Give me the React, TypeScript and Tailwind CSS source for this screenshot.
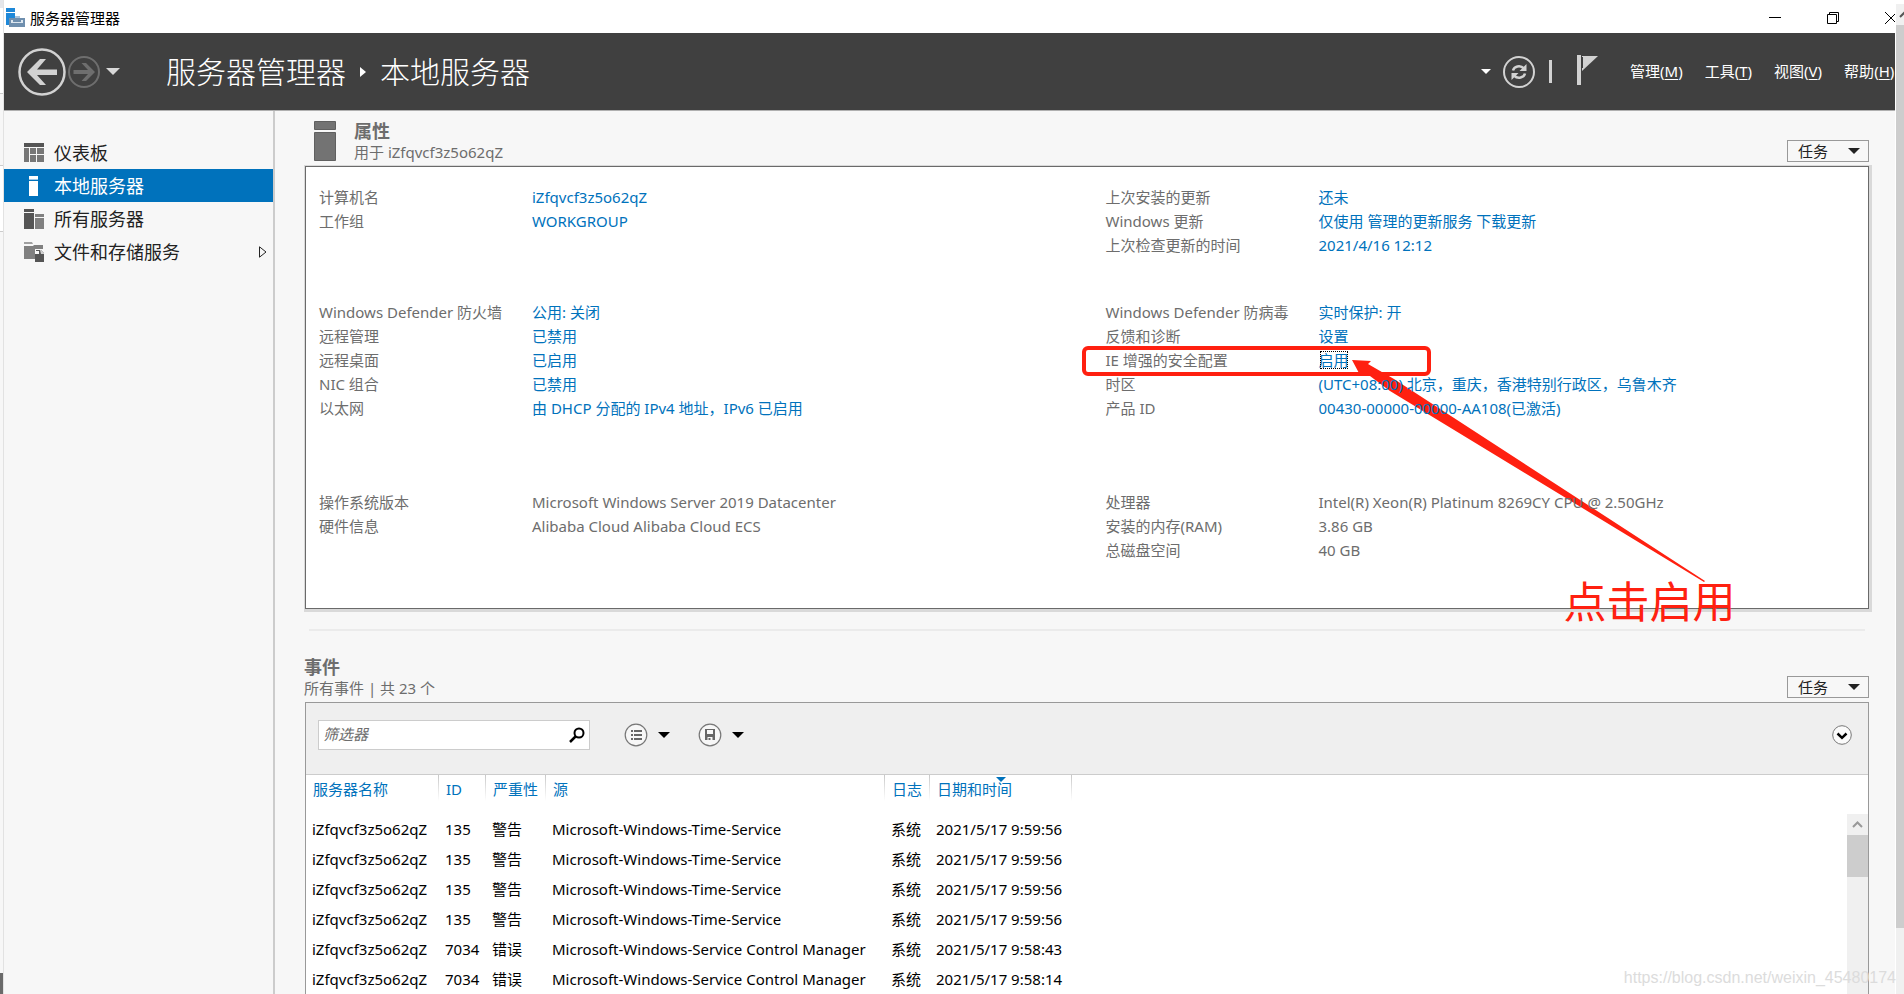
import React, { useState } from 'react';

type Property = {
  label: string;
  value: string;
  link?: boolean;
  focused?: boolean;
};

const leftGroups: Property[][] = [
  [
    { label: '计算机名', value: 'iZfqvcf3z5o62qZ', link: true },
    { label: '工作组', value: 'WORKGROUP', link: true },
  ],
  [
    { label: 'Windows Defender 防火墙', value: '公用: 关闭', link: true },
    { label: '远程管理', value: '已禁用', link: true },
    { label: '远程桌面', value: '已启用', link: true },
    { label: 'NIC 组合', value: '已禁用', link: true },
    { label: '以太网', value: '由 DHCP 分配的 IPv4 地址，IPv6 已启用', link: true },
  ],
  [
    { label: '操作系统版本', value: 'Microsoft Windows Server 2019 Datacenter' },
    { label: '硬件信息', value: 'Alibaba Cloud Alibaba Cloud ECS' },
  ],
];

const rightGroups: Property[][] = [
  [
    { label: '上次安装的更新', value: '还未', link: true },
    { label: 'Windows 更新', value: '仅使用 管理的更新服务 下载更新', link: true },
    { label: '上次检查更新的时间', value: '2021/4/16 12:12', link: true },
  ],
  [
    { label: 'Windows Defender 防病毒', value: '实时保护: 开', link: true },
    { label: '反馈和诊断', value: '设置', link: true },
    { label: 'IE 增强的安全配置', value: '启用', link: true, focused: true },
    { label: '时区', value: '(UTC+08:00) 北京，重庆，香港特别行政区，乌鲁木齐', link: true },
    { label: '产品 ID', value: '00430-00000-00000-AA108(已激活)', link: true },
  ],
  [
    { label: '处理器', value: 'Intel(R) Xeon(R) Platinum 8269CY CPU @ 2.50GHz' },
    { label: '安装的内存(RAM)', value: '3.86 GB' },
    { label: '总磁盘空间', value: '40 GB' },
  ],
];

const host = 'iZfqvcf3z5o62qZ';

const events = [
  [host, '135', '警告', 'Microsoft-Windows-Time-Service', '系统', '2021/5/17 9:59:56'],
  [host, '135', '警告', 'Microsoft-Windows-Time-Service', '系统', '2021/5/17 9:59:56'],
  [host, '135', '警告', 'Microsoft-Windows-Time-Service', '系统', '2021/5/17 9:59:56'],
  [host, '135', '警告', 'Microsoft-Windows-Time-Service', '系统', '2021/5/17 9:59:56'],
  [host, '7034', '错误', 'Microsoft-Windows-Service Control Manager', '系统', '2021/5/17 9:58:43'],
  [host, '7034', '错误', 'Microsoft-Windows-Service Control Manager', '系统', '2021/5/17 9:58:14'],
];

const columns = [
  { title: '服务器名称', width: 'w-[133px]' },
  { title: 'ID', width: 'w-[47px]' },
  { title: '严重性', width: 'w-[60px]' },
  { title: '源', width: 'w-[339px]' },
  { title: '日志', width: 'w-[45px]' },
  { title: '日期和时间', width: 'w-[142px]', sorted: true },
];

const Triangle = ({ className }: { className: string }) => (
  <svg viewBox="0 0 12 6" className={className} fill="currentColor" aria-hidden="true">
    <path d="M0 0h12L6 6z" />
  </svg>
);

const DashboardIcon = () => (
  <svg viewBox="0 0 20 20" className="h-5 w-5">
    <path fill="#555" d="M0 0h20v4H0z" />
    <path fill="#777" d="M0 5h5v14H0zM6 5h6v6H6zM13 5h7v6h-7zM6 12h6v7H6zM13 12h7v7h-7z" />
  </svg>
);

const LocalServerIcon = () => (
  <svg viewBox="0 0 20 20" className="h-5 w-5" fill="#fff">
    <path d="M5 0h9v3H5zM5 5h9v15H5z" />
    <path fill="#9cc9ea" d="M5 3h9v1H5z" />
  </svg>
);

const AllServersIcon = () => (
  <svg viewBox="0 0 20 20" className="h-5 w-5">
    <path fill="#555" d="M0 0h10v3H0zM0 4h10v16H0z" />
    <path fill="#808080" d="M11 5h9v3h-9zM11 9h9v11h-9z" />
  </svg>
);

const FilesIcon = () => (
  <svg viewBox="0 0 20 20" className="h-5 w-5">
    <path fill="#808080" d="M0 1h8v1H0zM0 4h9l1-1h9v4h-8v10H0z" />
    <path fill="#a0a0a0" d="M0 0h8l1 2H0z" />
    <path fill="#555" d="M12 8h5l3 3v9h-9v-8h4V9h-3z" />
    <path fill="#d0d0d0" d="M16 8h1l3 3v1h-3z" />
  </svg>
);

const navItems = [
  { name: '仪表板', icon: <DashboardIcon /> },
  { name: '本地服务器', icon: <LocalServerIcon /> },
  { name: '所有服务器', icon: <AllServersIcon /> },
  { name: '文件和存储服务', icon: <FilesIcon />, expandable: true },
];

const menus = [
  { name: '管理', letter: 'M' },
  { name: '工具', letter: 'T' },
  { name: '视图', letter: 'V' },
  { name: '帮助', letter: 'H' },
];

const TasksButton = () => (
  <button type="button" className="flex h-[22px] w-[82px] shrink-0 items-center justify-between border border-[#999] bg-[#f7f7f7] pr-2 pl-2.5 text-[15px] leading-5 text-[#222]">
    任务
    <Triangle className="h-1.5 w-3" />
  </button>
);

// Red frame and arrow that point at the IE setting
const Callout = () => (
  <>
    <span className="pointer-events-none absolute -top-0.5 -left-6 h-[30px] w-[349px] rounded-md border-4 border-[#ff2010]" />
    <svg viewBox="0 0 360 232" className="pointer-events-none absolute top-3 left-[246px] h-[232px] w-[360px]" fill="#ff2010">
      <path d="M0 0L19 1L16 4L42 19L353 221L352 222L38 31L14 13L8 15Z" />
    </svg>
    <span className="pointer-events-none absolute top-[226px] left-[458px] text-[43px] leading-[56px] whitespace-nowrap text-[#ff2010]">点击启用</span>
  </>
);

const PropertyRow = ({ item }: { item: Property }) => (
  <div className="relative flex leading-6 whitespace-nowrap">
    <dt className="w-[213px] shrink-0 text-[#6d6d6d]">{item.label}</dt>
    <dd>
      {item.link ? (
        <a href="#" className={item.focused ? 'text-[#0072bc] outline-1 -outline-offset-2 outline-black outline-dotted' : 'text-[#0072bc]'}>
          {item.value}
        </a>
      ) : (
        <span className="text-[#6d6d6d]">{item.value}</span>
      )}
    </dd>
    {item.focused && <Callout />}
  </div>
);

const PropertyColumn = ({ groups }: { groups: Property[][] }) => (
  <dl>
    <div className="h-[115px]">{groups[0].map((item) => <PropertyRow key={item.label} item={item} />)}</div>
    <div className="h-[190px]">{groups[1].map((item) => <PropertyRow key={item.label} item={item} />)}</div>
    <div className="h-[118px]">{groups[2].map((item) => <PropertyRow key={item.label} item={item} />)}</div>
  </dl>
);

const TitleBar = () => (
  <div className="flex h-[33px] shrink-0 items-center bg-white">
    <svg viewBox="0 0 20 20" className="ml-0.5 h-5 w-5">
      <path fill="#1e88d8" d="M0 1h9v4H0zM0 6h9v12H0z" />
      <path fill="#a9c3da" d="M9 9h5v3H9z" />
      <path fill="#6f8fae" d="M3 11h16v9H3z" />
      <path fill="#dce6ef" d="M5 13h12v3H5z" />
      <path fill="#6f8fae" d="M7 13h8v2H7z" />
    </svg>
    <span className="ml-1 grow pt-0.5 text-[15px] leading-6 text-black">服务器管理器</span>
    <div className="flex pt-[3px] text-black">
      <button type="button" aria-label="Minimize" className="w-[58px]">
        <svg viewBox="0 0 12 12" className="h-3 w-3" stroke="currentColor"><path d="M0 5.5h12" /></svg>
      </button>
      <button type="button" aria-label="Restore" className="w-[58px]">
        <svg viewBox="0 0 12 12" className="h-3 w-3" fill="none" stroke="currentColor"><path d="M.5 2.500h9v9h-9zM2.500 2.500v-2h9v9h-2" /></svg>
      </button>
      <button type="button" aria-label="Close" className="w-2.5 overflow-hidden">
        <svg viewBox="0 0 12 12" className="h-3 w-3 max-w-none" stroke="currentColor"><path d="M0 0l12 12M12 0L0 12" /></svg>
      </button>
    </div>
  </div>
);

const NavHeader = () => (
  <header className="flex h-[78px] shrink-0 items-center border-b border-[#b0b0b0] bg-[#404040] text-white">
    <button type="button" aria-label="Back" className="ml-3.5">
      <svg viewBox="0 0 48 48" className="h-12 w-12" fill="none" stroke="#d2d2d2">
        <circle cx="24" cy="24" r="22.500" strokeWidth="2.500" />
        <path fill="#d2d2d2" stroke="none" d="M9 24L22 11h6L19 21.500h20v5.500H19L28 37h-6z" />
      </svg>
    </button>
    <button type="button" aria-label="Forward" className="ml-0.5">
      <svg viewBox="0 0 32 32" className="h-8 w-8" fill="none" stroke="#6e6e6e">
        <circle cx="16" cy="16" r="15" strokeWidth="2" />
        <path fill="#6e6e6e" stroke="none" d="M27 16L18 7h-4.500L20 14H5.500v4H20L13.500 25H18z" />
      </svg>
    </button>
    <button type="button" aria-label="History" className="ml-1.5">
      <Triangle className="h-[7px] w-3.5 text-[#d8d8d8]" />
    </button>
    <h1 className="ml-[46px] flex grow items-center text-3xl font-light whitespace-nowrap">
      服务器管理器
      <svg viewBox="0 0 6 10" className="mx-3.5 h-2.5 w-1.5" fill="#fff"><path d="M0 0l6 5-6 5z" /></svg>
      本地服务器
    </h1>
    <button type="button" aria-label="Notifications list">
      <Triangle className="h-[5px] w-2.5" />
    </button>
    <button type="button" aria-label="Refresh" className="ml-3">
      <svg viewBox="0 0 32 32" className="h-8 w-8" fill="none" stroke="#d2d2d2">
        <circle cx="16" cy="16" r="15" strokeWidth="2" />
        <path strokeWidth="2.500" d="M10 14.500c1-4 7-6 11-2M22 17.500c-1 4-7 6-11 2" />
        <path fill="#d2d2d2" stroke="none" d="M23.500 8v7h-7zM8.500 24v-7h7z" />
      </svg>
    </button>
    <span className="ml-3.5 h-[23px] w-[3px] bg-[#d2d2d2]" />
    <button type="button" aria-label="Notifications" className="ml-6 pb-1">
      <svg viewBox="0 0 24 30" className="h-[30px] w-6" fill="#d2d2d2">
        <path d="M1 0h4v30H1z" />
        <path d="M6 1h16L6 16z" />
        <path stroke="#404040" d="M6.500 2v11" />
      </svg>
    </button>
    <nav className="ml-[30px] flex w-[265px] shrink-0 gap-[22px] text-[15px]">
      {menus.map((menu) => (
        <button key={menu.letter} type="button" className="shrink-0 pb-0.5 leading-6">
          {menu.name}(<u className="underline-offset-2">{menu.letter}</u>)
        </button>
      ))}
    </nav>
  </header>
);

const Sidebar = () => {
  const [active, setActive] = useState('本地服务器');

  return (
    <aside className="w-[271px] shrink-0 border-r-2 border-[#ccc] pt-[25px]">
      {navItems.map((item) => (
        <button
          key={item.name}
          type="button"
          onClick={() => setActive(item.name)}
          className={`flex h-[33px] w-full items-center gap-2.5 pr-1.5 pl-5 text-lg ${active === item.name ? 'bg-[#0072bc] text-white' : 'text-[#222]'}`}
        >
          {item.icon}
          <span className="grow text-left">{item.name}</span>
          {item.expandable && (
            <svg viewBox="0 0 8 12" className="h-3 w-2" fill="none" stroke="#222"><path d="M.5.8L7 6 .5 11.200z" /></svg>
          )}
        </button>
      ))}
    </aside>
  );
};

const PropertiesPanel = () => (
  <section>
    <div className="flex items-end justify-between pb-1">
      <div className="flex items-center text-[#6d6d6d]">
        <svg viewBox="0 0 22 40" className="ml-[9px] h-10 w-[22px]" fill="#737373">
          <path stroke="#606060" d="M.5.5h21v8H.5zM.5 11.500h21v28H.5z" />
        </svg>
        <div className="ml-[18px]">
          <h2 className="text-lg leading-[22px] font-bold">属性</h2>
          <p className="leading-5">用于 {host}</p>
        </div>
      </div>
      <TasksButton />
    </div>
    <div className="grid grid-cols-2 gap-6 border border-[#6a6a6a] bg-white pt-[18px] pl-[13px] shadow-[1px_1px_0_2px_#d9d9d9]">
      <PropertyColumn groups={leftGroups} />
      <PropertyColumn groups={rightGroups} />
    </div>
  </section>
);

const EventsPanel = () => (
  <section className="flex min-h-0 grow flex-col">
    <div className="flex items-end justify-between pb-1">
      <div className="-ml-px text-[#6d6d6d]">
        <h2 className="text-lg leading-[22px] font-bold">事件</h2>
        <p className="leading-5">所有事件 | 共 23 个</p>
      </div>
      <TasksButton />
    </div>
    <div className="flex min-h-0 grow flex-col border border-b-0 border-[#999] bg-white">
      <div className="flex h-[72px] shrink-0 items-center border-b border-[#ccc] bg-[#efefef] pr-4 pb-2 pl-3">
        <label className="flex h-[30px] w-[272px] items-center border border-[#ccc] bg-white px-1">
          <input aria-label="筛选器" placeholder="筛选器" className="w-0 grow italic outline-none placeholder:text-[#6d6d6d]" />
          <svg viewBox="0 0 16 16" className="h-4 w-4" fill="none" stroke="#000">
            <circle cx="10" cy="6" r="4.500" strokeWidth="2" />
            <path strokeWidth="2.500" d="M7 9l-6 6" />
          </svg>
        </label>
        <button type="button" className="ml-[34px] flex items-center gap-2.5" aria-label="View">
          <svg viewBox="0 0 24 24" className="h-6 w-6">
            <circle cx="12" cy="12" r="10.800" fill="#f7f7f7" stroke="#777" strokeWidth="1.200" />
            <path fill="#666" d="M7 7h2v2H7zM10 7h8v2h-8zM7 11h2v2H7zM10 11h8v2h-8zM7 15h2v2H7zM10 15h8v2h-8z" />
          </svg>
          <Triangle className="h-1.5 w-3" />
        </button>
        <button type="button" className="ml-7 flex items-center gap-2.5" aria-label="Save">
          <svg viewBox="0 0 24 24" className="h-6 w-6">
            <circle cx="12" cy="12" r="10.800" fill="#f7f7f7" stroke="#777" strokeWidth="1.200" />
            <path fill="#666" fillRule="evenodd" d="M7 6h10v11H7zM9 7v4h6V7zM9.500 14v3h1v-2h2v2h2v-3z" />
          </svg>
          <Triangle className="h-1.5 w-3" />
        </button>
        <button type="button" className="ml-auto" aria-label="Expand">
          <svg viewBox="0 0 20 20" className="h-5 w-5" fill="none">
            <circle cx="10" cy="10" r="9.300" fill="#fbfbfb" stroke="#777" />
            <path stroke="#000" strokeWidth="2.500" d="M5.500 8.500L10 12.800l4.500-4.300" />
          </svg>
        </button>
      </div>
      <div className="flex min-h-0 grow justify-between overflow-hidden">
        <table className="w-max table-fixed self-start text-left whitespace-nowrap">
          <thead>
            <tr className="h-[39px] align-top leading-7 text-[#0072bc]">
              {columns.map((column) => (
                <th
                  key={column.title}
                  className={`relative bg-[linear-gradient(#c8c8c8,#fff)] bg-[length:1px_26px] bg-right-top bg-no-repeat p-0 pl-[7px] font-normal ${column.width}`}
                >
                  {column.title}
                  {column.sorted && <Triangle className="absolute top-0.5 left-[66px] h-[5px] w-2.5" />}
                </th>
              ))}
            </tr>
          </thead>
          <tbody className="leading-[30px] text-black">
            {events.map((event, index) => (
              <tr key={index}>
                {event.map((cell, i) => (
                  <td key={i} className="p-0 pl-1.5">{cell}</td>
                ))}
              </tr>
            ))}
          </tbody>
        </table>
        <div className="mt-[39px] w-[21px] bg-[#f0f0f0]">
          <svg viewBox="0 0 21 21" className="h-[21px] w-[21px]" fill="none" stroke="#999" strokeWidth="2"><path d="M6 13l4.500-4.500L15 13" /></svg>
          <div className="h-[42px] bg-[#cdcdcd]" />
        </div>
      </div>
    </div>
  </section>
);

const App = () => {
  return (
    <div className="relative flex h-screen overflow-hidden bg-white font-['Noto_Sans','Noto_Sans_CJK_SC',sans-serif] text-[15px]">
      {/* edge of the page behind the window */}
      <div className="flex w-1 shrink-0 flex-col border-r border-[#e2e2e2]">
        <div className="h-2 bg-[#e4e6ea]" />
        <div className="h-[86px] border-b border-[#ccc]" />
        <div className="h-[72px] border-b border-[#ccc] bg-[#f7f7f7]" />
        <div className="h-[66px] border-b border-[#ccc]" />
        <div className="grow bg-[#f7f7f7]" />
        <div className="h-[21px] bg-[#6a6a6a]" />
      </div>
      <div className="flex min-w-0 grow flex-col bg-[#f7f7f7]">
        <TitleBar />
        <NavHeader />
        <div className="flex min-h-0 grow">
          <Sidebar />
          <main className="flex min-w-0 grow flex-col pt-[9px] pr-[26px] pl-[30px]">
            <PropertiesPanel />
            <hr className="mx-1 mt-5 mb-[25px] border-t-2 border-[#ebebeb]" />
            <EventsPanel />
          </main>
        </div>
      </div>
      {/* outer scrollbar */}
      <div className="flex w-[9px] shrink-0 flex-col border-l border-white bg-[#f0f0f0]">
        <div className="h-1 bg-white" />
        <svg viewBox="0 0 8 21" className="h-[21px] w-2" fill="none" stroke="#555" strokeWidth="2"><path d="M4 13l5-5" /></svg>
        <div className="h-[903px] bg-[#cdcdcd]" />
      </div>
      <span className="pointer-events-none absolute right-2 bottom-1 font-['Liberation_Sans',sans-serif] text-base leading-6 text-[#dcdcdc]">
        https://blog.csdn.net/weixin_45480174
      </span>
    </div>
  );
};

export default App;
